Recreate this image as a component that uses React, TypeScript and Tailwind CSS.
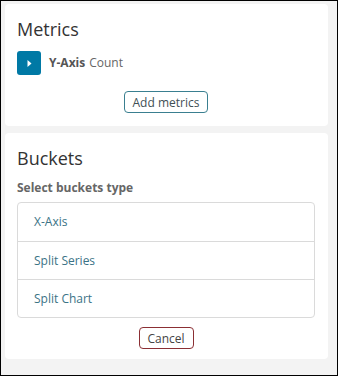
export default function App() {
  const buckets = ['X-Axis', 'Split Series', 'Split Chart'];

  return (
    <div className="w-[338px] h-[376px] border border-black bg-[#f3f3f3] pl-1 pr-[9px] pt-[3px] font-['Open_Sans',sans-serif]">
      {/* Metrics */}
      <div className="bg-white rounded-[4px] h-[122px] pl-3 pr-[13px] pt-[13px]">
        <h2 className="text-[18px] leading-[24px] text-[#333]">Metrics</h2>
        <div className="flex items-center mt-[10px] h-6">
          <div className="w-6 h-6 rounded-[3px] bg-[#0079a5] flex items-center justify-center">
            <svg width="8" height="9" viewBox="0 0 8 9">
              <path d="M2.5 1 L6.5 4.5 L2.5 8 Z" fill="white" />
            </svg>
          </div>
          <span className="ml-2 text-[12px] font-bold text-[#555]">Y-Axis</span>
          <span className="ml-1 text-[12px] text-[#666]">Count</span>
        </div>
        <div className="flex justify-center mt-4">
          <button className="w-[84px] h-[22px] border border-[#3a7f90] rounded-[4px] text-[12px] leading-none pt-px text-[#3f4f55] bg-white">
            Add metrics
          </button>
        </div>
      </div>

      {/* Buckets */}
      <div className="bg-white rounded-[4px] h-[226px] mt-[7px] pl-3 pr-[13px] pt-[13px]">
        <h2 className="text-[18px] leading-[24px] text-[#333]">Buckets</h2>
        <div className="mt-[10px] text-[12px] leading-4 font-bold text-[#666]">Select buckets type</div>
        <div className="mt-[6px] border border-[#dadada] rounded-[4px]">
          {buckets.map((b, i) => (
            <div
              key={b}
              className={`h-[38px] flex items-center pl-4 text-[12px] text-[#3b7386] ${i > 0 ? 'border-t border-[#dadada]' : ''}`}
            >
              {b}
            </div>
          ))}
        </div>
        <div className="flex justify-center mt-[9px]">
          <button className="w-[55px] h-[22px] border border-[#8b2f34] rounded-[4px] text-[12px] leading-none pt-px text-[#444] bg-white">
            Cancel
          </button>
        </div>
      </div>
    </div>
  );
}
